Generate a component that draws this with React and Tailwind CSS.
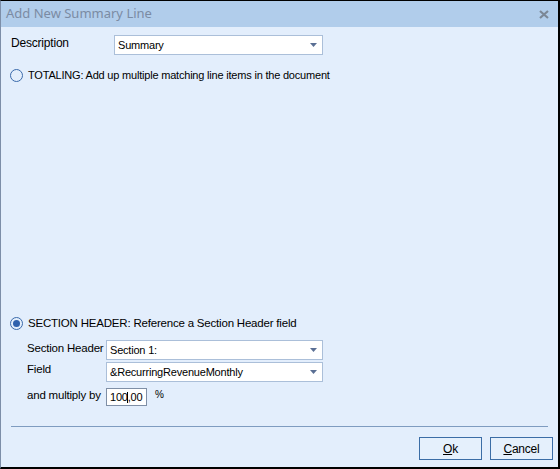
import React from 'react';

const Combo = ({ value, className = '' }) => (
  <div className={`flex items-center justify-between bg-white border border-[#abbfd9] h-[20px] pl-[3px] pr-[5px] ${className}`}>
    <span className="text-[11px] text-black leading-none">{value}</span>
    <svg width="7" height="4" viewBox="0 0 7 4">
      <path d="M0 0h7L3.5 4z" fill="#5a6f94" />
    </svg>
  </div>
);

const Radio = ({ checked }) => (
  <span className="w-[13px] h-[13px] rounded-full border border-[#3a6aab] flex items-center justify-center bg-[#e3eefc] shrink-0">
    {checked && <span className="w-[7px] h-[7px] rounded-full bg-[#2f61ad]" />}
  </span>
);

const App = () => {
  return (
    <div
      className="w-[560px] h-[469px] flex flex-col border-t border-black border-r-2 border-b-2 border-l border-l-[#7d8ea8] bg-[#e3eefc] text-black tracking-[-0.2px]"
      style={{ fontFamily: '"Liberation Sans", Arial, sans-serif' }}
    >
      {/* Title bar */}
      <div className="h-[26px] bg-[#b1cdeb] flex items-center justify-between pl-[5px] pr-[9px] shrink-0 tracking-normal">
        <span className="text-[13px] text-[#7b8ba3]" style={{ fontFamily: '"Noto Sans", "Open Sans", sans-serif' }}>
          Add New Summary Line
        </span>
        <svg width="10" height="9" viewBox="0 0 10 9">
          <path d="M1 1l8 7M9 1l-8 7" stroke="#7b8796" strokeWidth="2.2" />
        </svg>
      </div>

      {/* Body */}
      <div className="flex-1 flex flex-col pt-[8px] pb-[7px] text-[11px]">
        <div className="flex items-center pl-[10px]">
          <span className="w-[103px] -mt-[4px] text-[12px]">Description</span>
          <Combo value="Summary" className="w-[209px]" />
        </div>

        <div className="flex items-center gap-[5px] pl-[9px] mt-[12px] text-[11px]">
          <Radio />
          <span className="whitespace-nowrap">TOTALING: Add up multiple matching line items in the document</span>
        </div>

        <div className="flex-1" />

        <div className="flex items-center gap-[5px] pl-[9px] mb-[1px] text-[11.5px]">
          <Radio checked />
          <span className="whitespace-nowrap">SECTION HEADER: Reference a Section Header field</span>
        </div>

        <div className="flex flex-col gap-[2px] pl-[26px] mt-[7px] text-[11.5px]">
          <div className="flex items-center">
            <span className="w-[79px] -mt-[3px] whitespace-nowrap">Section Header</span>
            <Combo value="Section 1:" className="w-[217px]" />
          </div>
          <div className="flex items-center">
            <span className="w-[79px] -mt-[5px]">Field</span>
            <Combo value="&RecurringRevenueMonthly" className="w-[217px]" />
          </div>
          <div className="flex items-center mt-[4px]">
            <span className="w-[79px] -mt-[3px] whitespace-nowrap">and multiply by</span>
            <div className="relative w-[41px] h-[18px] bg-white border border-[#7f8fa6] flex items-center pl-[3px] text-[11px]">
              <span className="leading-none">100,00</span>
              <span className="absolute left-[20px] top-[3px] w-px h-[11px] bg-black" />
            </div>
            <span className="ml-[8px] -mt-[6px] text-[10px]">%</span>
          </div>
        </div>

        <div className="mx-[10px] mt-[20px] h-px bg-[#7f9cc0]" />

        <div className="flex justify-end gap-[8px] pr-[5px] mt-[10px]">
          <button className="w-[63px] h-[23px] border border-[#3b6da6] bg-[#e5f0fc] text-[12px]">
            <span className="underline">O</span>k
          </button>
          <button className="w-[63px] h-[23px] border border-[#3b6da6] bg-[#e5f0fc] text-[12px]">
            <span className="underline">C</span>ancel
          </button>
        </div>
      </div>
    </div>
  );
};

export default App;
